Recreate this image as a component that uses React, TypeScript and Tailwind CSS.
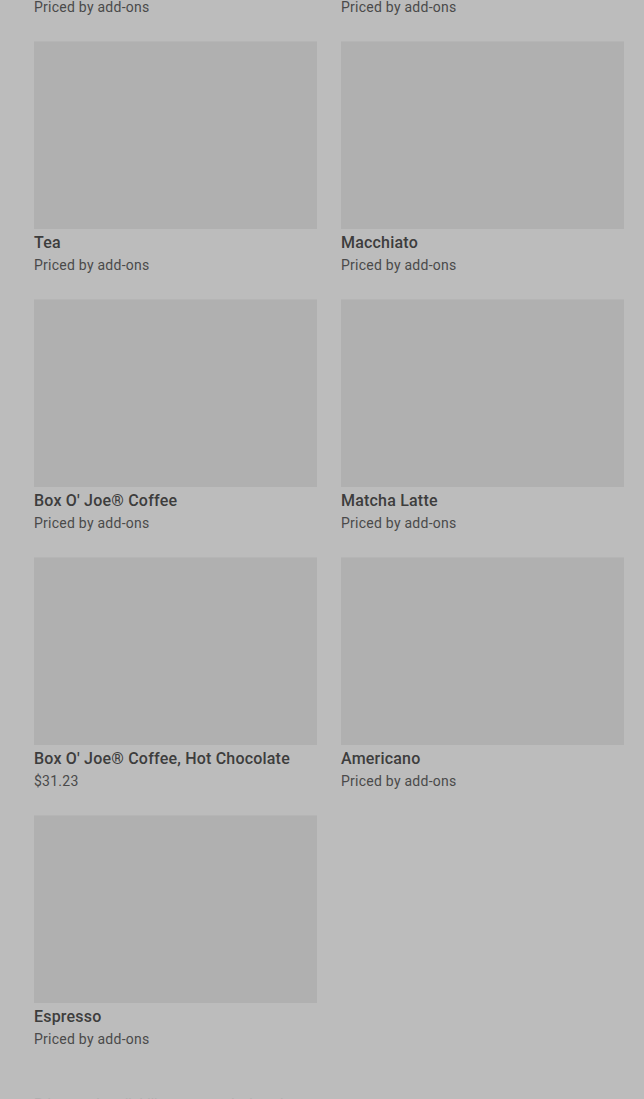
const items = [
  { name: "Hidden", price: "Priced by add-ons" },
  { name: "Hidden", price: "Priced by add-ons" },
  { name: "Tea", price: "Priced by add-ons" },
  { name: "Macchiato", price: "Priced by add-ons" },
  { name: "Box O' Joe® Coffee", price: "Priced by add-ons" },
  { name: "Matcha Latte", price: "Priced by add-ons" },
  { name: "Box O' Joe® Coffee, Hot Chocolate", price: "$31.23" },
  { name: "Americano", price: "Priced by add-ons" },
  { name: "Espresso", price: "Priced by add-ons" },
];

function App() {
  return (
    <div
      className="min-h-screen overflow-hidden bg-[#bcbcbc] pl-[34px] pr-[20px]"
      style={{ fontFamily: "Roboto, 'Liberation Sans', sans-serif" }}
    >
      <div className="mt-[-217px] grid grid-cols-2 gap-x-6 gap-y-6">
        {items.map((item, i) => (
          <article key={i}>
            <div className="h-[188px] bg-[#b0b0b0] border-t border-[#b5b5b5]" />
            <h2 className="mt-[2px] text-base leading-6 font-medium tracking-[0.2px] text-[#3d3d3d]">
              {item.name}
            </h2>
            <p className="text-sm leading-5 tracking-[0.25px] text-[#4a4a4a]">
              {item.price}
            </p>
          </article>
        ))}
      </div>

      <p className="mt-[45px] text-sm leading-5 text-[#b0b0b0]">
        Prices and availability may vary by location
      </p>
    </div>
  );
}

export default App;
